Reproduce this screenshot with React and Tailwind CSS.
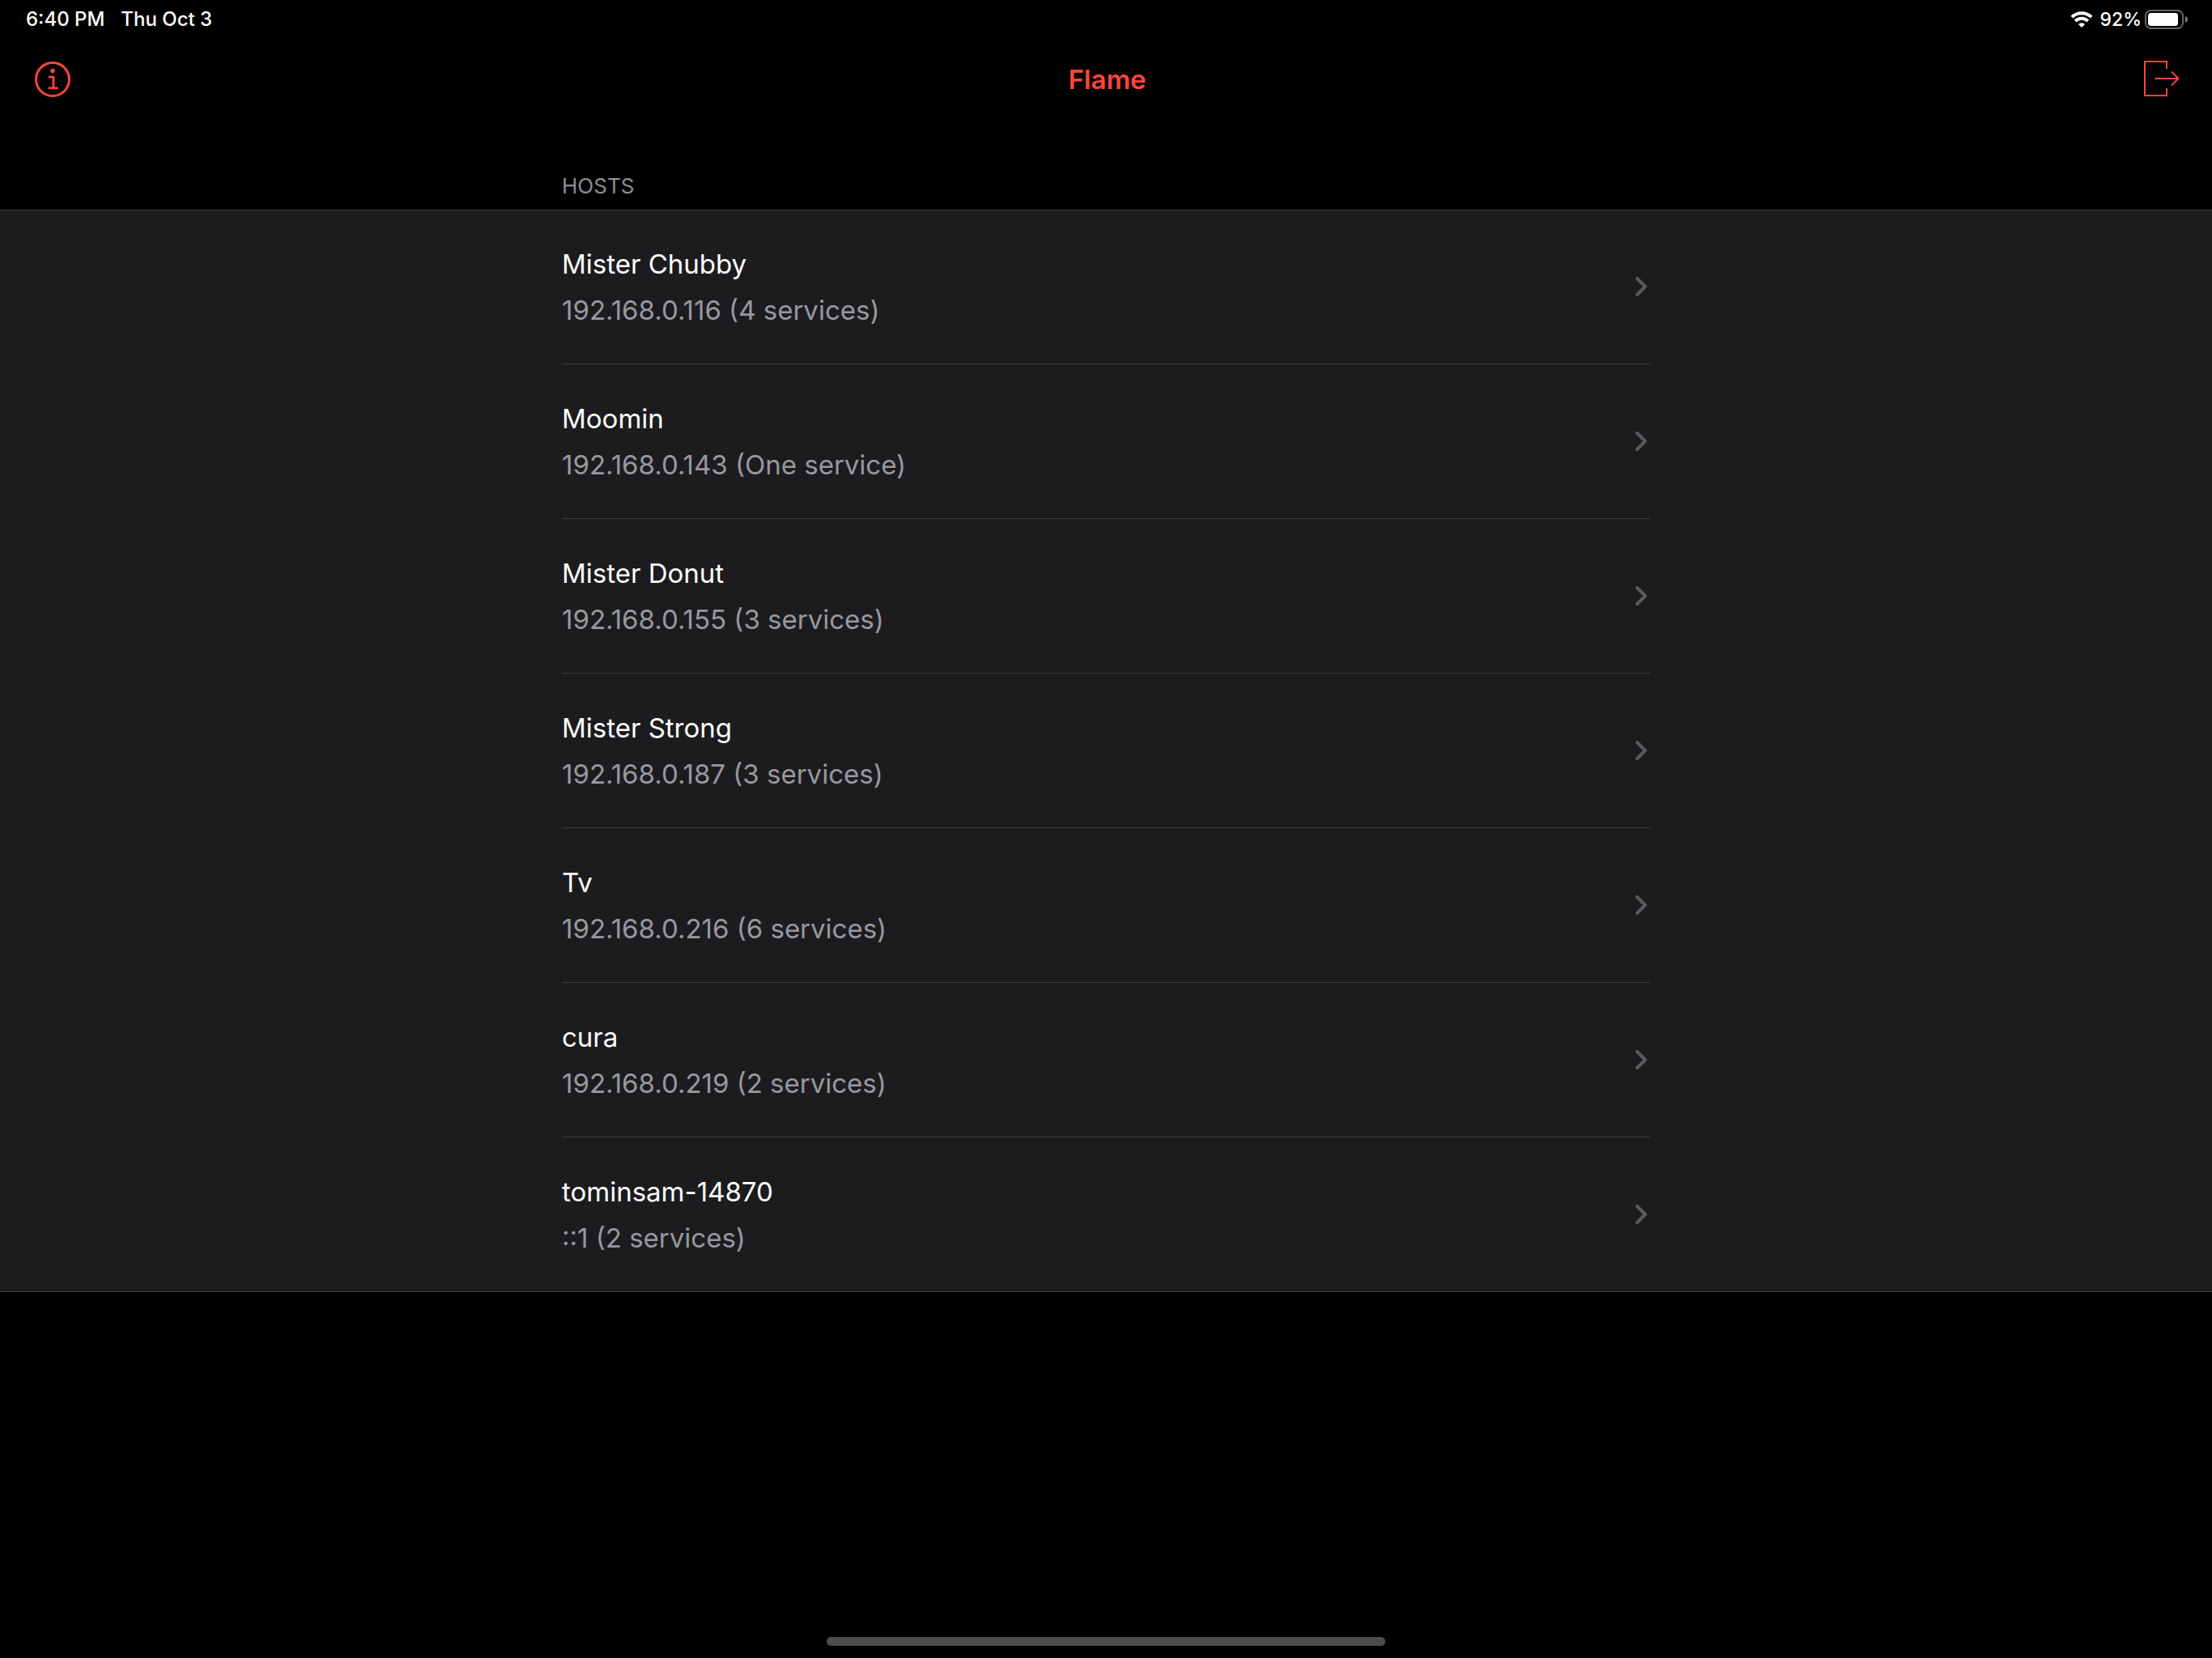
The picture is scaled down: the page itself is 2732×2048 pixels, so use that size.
import React from "react";

const hosts = [
  { name: "Mister Chubby", detail: "192.168.0.116 (4 services)" },
  { name: "Moomin", detail: "192.168.0.143 (One service)" },
  { name: "Mister Donut", detail: "192.168.0.155 (3 services)" },
  { name: "Mister Strong", detail: "192.168.0.187 (3 services)" },
  { name: "Tv", detail: "192.168.0.216 (6 services)" },
  { name: "cura", detail: "192.168.0.219 (2 services)" },
  { name: "tominsam-14870", detail: "::1 (2 services)" },
];

function WifiIcon() {
  return (
    <svg width="28" height="20" viewBox="0 0 28 20" fill="none" stroke="#fff" strokeWidth="4" aria-hidden="true">
      <path d="M1.900 7.200a17.200 17.200 0 0 1 24.200 0" />
      <path d="M6.200 12a11 11 0 0 1 15.600 0" />
      <path d="M14 20l-4-4a5.700 5.700 0 0 1 8 0z" fill="#fff" stroke="none" />
    </svg>
  );
}

function BatteryIcon() {
  return (
    <svg width="53" height="24" viewBox="0 0 53 24" aria-hidden="true">
      <rect x="1" y="1" width="46" height="22" rx="6.500" fill="none" stroke="#666" strokeWidth="2" />
      <rect x="4" y="4" width="37" height="16" rx="3.500" fill="#fff" />
      <path d="M50 8c1.900.7 3 2.200 3 4s-1.100 3.300-3 4z" fill="#808080" />
    </svg>
  );
}

function InfoIcon() {
  return (
    <svg width="44" height="44" viewBox="0 0 44 44" fill="none" stroke="currentColor" aria-hidden="true">
      <circle cx="22" cy="22" r="20.500" strokeWidth="3" />
      <circle cx="22" cy="11.500" r="2.700" fill="currentColor" stroke="none" />
      <path d="M18 19.200h5v13.600M17.800 32.800h9.800" strokeWidth="2.800" strokeLinecap="round" strokeLinejoin="round" />
    </svg>
  );
}

function ExitIcon() {
  return (
    <svg width="44" height="46" viewBox="0 0 44 46" fill="none" stroke="currentColor" strokeWidth="2" aria-hidden="true">
      <path d="M28 10V1H1v42h27v-9" />
      <path d="M13.500 22H42M34 13.500L42.500 22L34 30.500" />
    </svg>
  );
}

function Chevron() {
  return (
    <svg width="14" height="24" viewBox="0 0 14 24" fill="none" stroke="#5b5b5f" strokeWidth="4" strokeLinecap="round" strokeLinejoin="round" className="mr-1 shrink-0" aria-hidden="true">
      <path d="M2 2L12 12L2 22" />
    </svg>
  );
}

export default function App() {
  return (
    <div className="flex min-h-screen flex-col bg-black font-['Inter',sans-serif] text-white">
      <div className="flex h-12 items-center justify-between pr-[30px] pl-8 text-[23px] font-medium">
        <div className="flex gap-5 text-2xl">
          <span>6:40 PM</span>
          <span>Thu Oct 3</span>
        </div>
        <div className="flex items-center">
          <WifiIcon />
          <span className="mr-1 ml-2">92%</span>
          <BatteryIcon />
        </div>
      </div>

      <header className="flex h-[100px] items-center justify-between pr-10 pl-[43px] text-[#ff453a]">
        <button type="button" aria-label="About">
          <InfoIcon />
        </button>
        <h1 className="pt-0.5 text-[33px] font-semibold">Flame</h1>
        <button type="button" aria-label="Exit">
          <ExitIcon />
        </button>
      </header>

      <main>
        <h2 className="mx-auto max-w-[1344px] pt-[66px] pb-[13px] text-[26px] leading-8 text-[#8d8d93]">HOSTS</h2>
        <ul className="bg-[#1c1c1e] shadow-[inset_0_1px_0_#3d3d41,inset_0_-1px_0_#3d3d41]">
          {hosts.map((host) => (
            <li key={host.name} className="group">
              <a
                href="#"
                className="mx-auto flex h-[191px] max-w-[1344px] items-center justify-between border-b border-[#3d3d41] group-last:border-transparent"
              >
                <div className="pt-0.5 text-[33px] leading-[57px]">
                  <div>{host.name}</div>
                  <div className="text-[#98989f]">{host.detail}</div>
                </div>
                <Chevron />
              </a>
            </li>
          ))}
        </ul>
      </main>

      <div className="mx-auto mt-auto mb-[15px] h-[11px] w-[690px] rounded-full bg-[#4c4c4c]" />
    </div>
  );
}
